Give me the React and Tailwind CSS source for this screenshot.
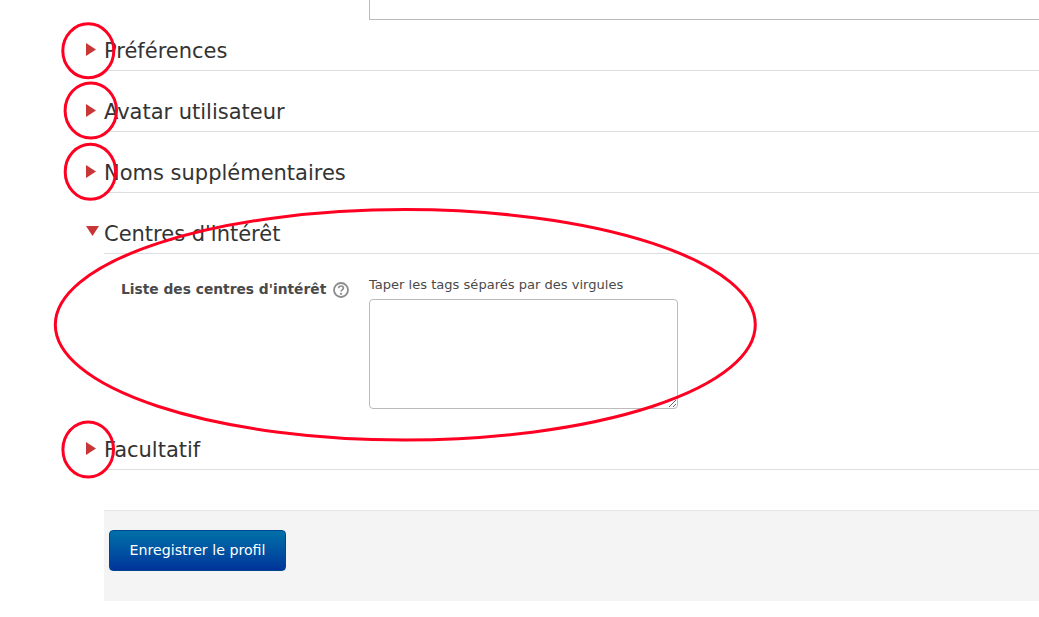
import React from "react";

function Arrow({ open }) {
  return open ? (
    <svg width="13" height="10" viewBox="0 0 13 10" className="block mt-[11px]">
      <polygon points="0,0 13,0 6.5,10" fill="#c83737" />
    </svg>
  ) : (
    <svg width="10" height="13" viewBox="0 0 10 13" className="block mt-[11px]">
      <polygon points="0,0 10,6.5 0,13" fill="#c83737" />
    </svg>
  );
}

function Section({ title, open, first, children }) {
  return (
    <section className={first ? "" : "mt-[10px]"}>
      <div className="flex pl-[86px]">
        <div className="w-[18px] shrink-0 pt-[12px]">
          <Arrow open={open} />
        </div>
        <h3 className="flex-1 h-[51px] pt-[19px] border-b border-[#dddddd] text-[21px] tracking-[-0.01px] leading-[24px] font-normal text-[#333333]">
          {title}
        </h3>
      </div>
      {children}
    </section>
  );
}

function Annotations() {
  return (
    <svg className="absolute left-0 top-0 pointer-events-none" width="1039" height="617" viewBox="0 0 1039 617" fill="none" stroke="#ff0022" strokeWidth="3">
      <ellipse cx="88.3" cy="50.8" rx="25.5" ry="27" />
      <ellipse cx="90.8" cy="110.5" rx="25.7" ry="27.5" />
      <ellipse cx="90.4" cy="171.7" rx="25.2" ry="27.5" />
      <ellipse cx="88.2" cy="449.5" rx="25.3" ry="27.5" />
      <ellipse cx="405.3" cy="324.8" rx="350" ry="115.2" />
    </svg>
  );
}

export default function App() {
  return (
    <div className="relative w-[1039px] h-[617px] overflow-hidden bg-white font-['DejaVu_Sans',sans-serif] text-[#333333]">
      <div className="ml-[369px] h-[20px] border-l border-b border-[#bbbbbb]" />
      <Section first title="Préférences" />
      <Section title="Avatar utilisateur" />
      <Section title="Noms supplémentaires" />
      <Section open title="Centres d'intérêt">
        <div className="flex pl-[121px] pt-[21px]">
          <div className="w-[248px] shrink-0 flex items-center h-[28px]">
            <span className="text-[13.8px] font-bold text-[#4a4a4a] whitespace-nowrap">Liste des centres d'intérêt</span>
            <svg width="16" height="16" viewBox="0 0 16 16" className="ml-[7px] mt-[1px]" fill="none">
              <circle cx="8" cy="8" r="7" stroke="#8c8c8c" strokeWidth="1.8" />
              <path d="M5.6 6.3c0-1.4 1.1-2.3 2.4-2.3s2.4.9 2.4 2.1c0 1.8-2.4 1.7-2.4 3.5" stroke="#8c8c8c" strokeWidth="1.7" />
              <circle cx="8" cy="11.8" r="1.1" fill="#8c8c8c" />
            </svg>
          </div>
          <div>
            <div className="text-[13.05px] leading-[20px] text-[#4a4a4a]">Taper les tags séparés par des virgules</div>
            <textarea className="block mt-[4px] w-[309px] h-[110px] border border-[#bbbbbb] rounded-[4px] bg-white resize" />
          </div>
        </div>
      </Section>
      <Section title="Facultatif" />
      <div className="ml-[104px] mt-[40px] h-[91px] bg-[#f4f4f4] border-t border-[#e6e6e6] pt-[19px] pl-[5px]">
        <button className="block w-[177px] h-[41px] rounded-[4px] border border-[#00458f] bg-gradient-to-b from-[#0070a8] to-[#003399] text-[14.2px] text-white">
          Enregistrer le profil
        </button>
      </div>
      <Annotations />
    </div>
  );
}
